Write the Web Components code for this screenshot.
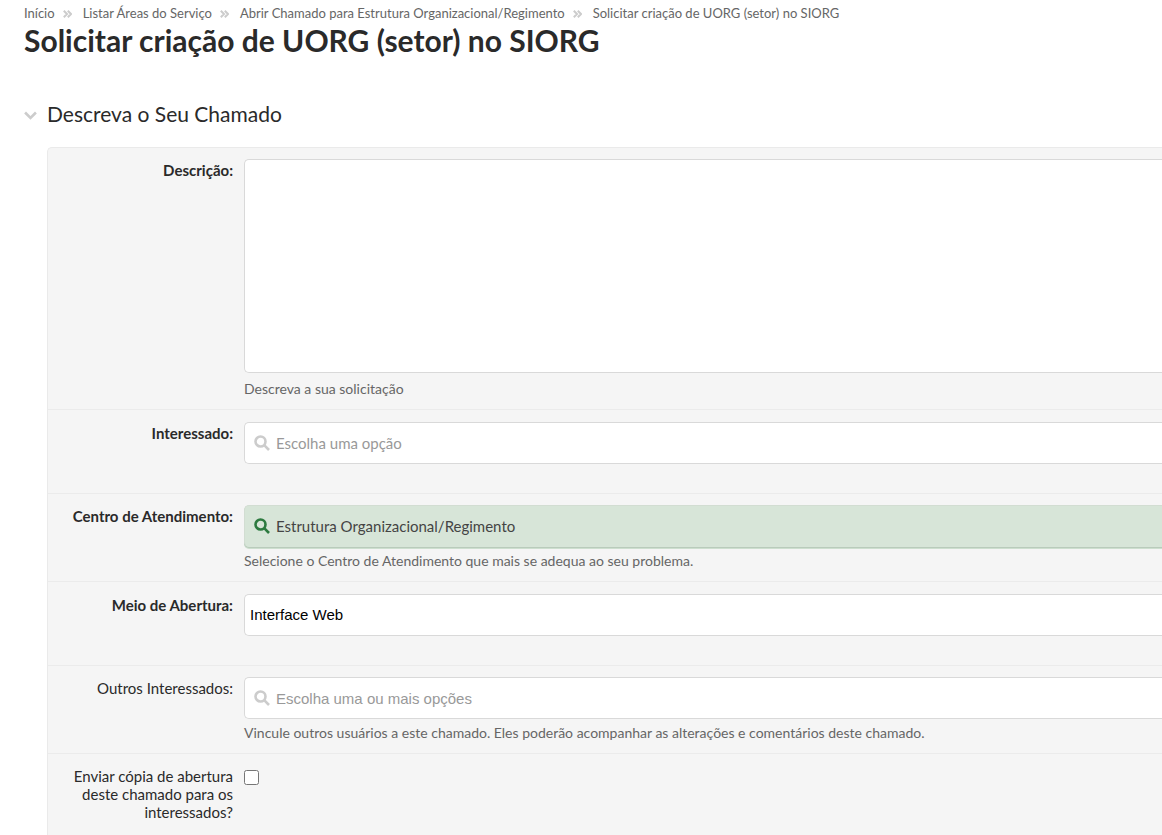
<!DOCTYPE html>
<html lang="pt-BR">
<head>
<meta charset="utf-8">
<meta name="viewport" content="width=device-width, initial-scale=1">
<title>Solicitar criação de UORG (setor) no SIORG</title>
<style>
  html { overflow-x: clip; }
  body { margin: 0; background: #fff; color: #2a2a2a; font: 15px/18px Lato, "Open Sans", sans-serif; }
</style>
</head>
<body>
<request-page heading="Solicitar criação de UORG (setor) no SIORG">
  <bread-crumbs slot="trail">
    <bread-crumb href="#inicio">Início</bread-crumb>
    <bread-crumb href="#areas">Listar Áreas do Serviço</bread-crumb>
    <bread-crumb href="#abrir">Abrir Chamado para Estrutura Organizacional/Regimento</bread-crumb>
    <bread-crumb>Solicitar criação de UORG (setor) no SIORG</bread-crumb>
  </bread-crumbs>
  <form-section heading="Descreva o Seu Chamado">
    <form-field type="textarea" label="Descrição:" required help="Descreva a sua solicitação"></form-field>
    <form-field type="search" label="Interessado:" required placeholder="Escolha uma opção"></form-field>
    <form-field type="search" label="Centro de Atendimento:" required filled value="Estrutura Organizacional/Regimento" help="Selecione o Centro de Atendimento que mais se adequa ao seu problema."></form-field>
    <form-field type="select" label="Meio de Abertura:" required value="Interface Web"></form-field>
    <form-field type="search" label="Outros Interessados:" multiple placeholder="Escolha uma ou mais opções" help="Vincule outros usuários a este chamado. Eles poderão acompanhar as alterações e comentários deste chamado."></form-field>
    <form-field type="checkbox" label="Enviar cópia de abertura deste chamado para os interessados?"></form-field>
  </form-section>
</request-page>
<script>
class RequestPage extends HTMLElement {
  constructor() {
    super();
    this.attachShadow({ mode: 'open' }).innerHTML = `
      <style>
        :host { display: block; padding: 4px 0 0 24px; }
        h1 { margin: 0; font-size: 30px; line-height: 36px; font-weight: 700; }
      </style>
      <slot name="trail"></slot><h1></h1><main><slot></slot></main>`;
    this.shadowRoot.querySelector('h1').textContent = this.getAttribute('heading');
  }
}

class BreadCrumbs extends HTMLElement {
  constructor() {
    super();
    this.attachShadow({ mode: 'open' }).innerHTML = `
      <style>
        :host { display: block; font-size: 13px; line-height: 18px; color: #666; }
        nav { display: flex; flex-wrap: wrap; }
      </style>
      <nav aria-label="Trilha"><slot></slot></nav>`;
  }
}

class BreadCrumb extends HTMLElement {
  constructor() {
    super();
    const href = this.getAttribute('href');
    this.attachShadow({ mode: 'open' }).innerHTML = `
      <style>
        :host { display: flex; align-items: center; }
        a { color: inherit; text-decoration: none; }
        svg { width: 9px; height: 8px; margin: 1px 11px 0 8px; fill: none; stroke: #ccc; stroke-width: 2; }
      </style>` + (href
        ? `<a href="${href}"><slot></slot></a><svg viewBox="0 0 9 8" aria-hidden="true"><path d="M.8 .8 4 4 .8 7.2M4.8 .8 8 4 4.8 7.2"/></svg>`
        : `<span aria-current="page"><slot></slot></span>`);
  }
}

class FormSection extends HTMLElement {
  constructor() {
    super();
    this.attachShadow({ mode: 'open' }).innerHTML = `
      <style>
        :host { display: block; margin-top: 43px; }
        h2 { margin: 0; font-size: 21px; line-height: 26px; font-weight: 400; }
        button { display: flex; align-items: center; gap: 10px; padding: 0; border: 0; background: none; color: inherit; font: inherit; cursor: pointer; }
        svg { width: 13px; height: 9px; margin-top: 3px; fill: none; stroke: #ccc; stroke-width: 2.4; }
        .panel { margin: 20px 0 0 23px; border: 1px solid #eaeaea; border-right: 0; border-radius: 5px 0 0 0; background: #f5f5f5; }
      </style>
      <h2><button type="button" aria-expanded="true"><svg viewBox="0 0 12 8" aria-hidden="true"><path d="M1 1.2 6 6.2 11 1.2"/></svg><span></span></button></h2>
      <div class="panel"><slot></slot></div>`;
    const button = this.shadowRoot.querySelector('button');
    const panel = this.shadowRoot.querySelector('.panel');
    button.querySelector('span').textContent = this.getAttribute('heading');
    button.addEventListener('click', () => {
      panel.hidden = !panel.hidden;
      button.setAttribute('aria-expanded', String(!panel.hidden));
    });
  }
}

const fieldTemplate = document.createElement('template');
fieldTemplate.innerHTML = `
  <style>
    :host { display: grid; grid-template-columns: 185px 1fr; column-gap: 11px; padding: 11px 0; border-bottom: 1px solid #ebebeb; }
    :host(:not([help])) { padding: 12px 0 29px; }
    :host([type=checkbox]) { padding: 11px 0 29px; border-bottom: 0; }
    * { box-sizing: border-box; }
    label { padding: 2px 0 0 24px; text-align: right; }
    :host([required]) label { font-weight: 700; }
    .help { margin: 5px 0 0; font-size: 14px; color: #666; }
    textarea, select, .box { display: block; width: 100%; border: 1px solid #d9d9d9; border-right: 0; border-radius: 5px 0 0 5px; background: #fff; }
    textarea { height: 214px; margin-bottom: 7px; padding: 8px; font: inherit; resize: none; }
    select { height: 42px; padding: 0 5px 2px; appearance: none; color: #000; font: 15px "Liberation Sans", Arial, sans-serif; }
    .box { display: flex; align-items: center; height: 42px; padding-left: 9px; gap: 6px; }
    .box svg { flex: none; width: 16px; height: 16px; fill: none; stroke: #ccc; stroke-width: 2.6; }
    .box input { flex: 1; min-width: 0; height: 40px; padding: 0; border: 0; outline: 0; background: none; color: #444; font: inherit; }
    input::placeholder { color: #999; opacity: 1; }
    :host([multiple]) .box input { font-family: "Liberation Sans", Arial, sans-serif; }
    :host([filled]) .box { background: #d7e5d8; border-color: #d2ddd2; border-bottom-color: #d7e5d8; box-shadow: 0 1px #b9cbbb, 0 2px #cddfcf; }
    :host([filled]) .box svg { stroke: #2c7a3f; }
    input[type=checkbox] { display: block; width: 15px; height: 15px; margin: 5px 0 0; }
  </style>
  <label for="control"></label>
  <div class="field"></div>`;

class FormField extends HTMLElement {
  constructor() {
    super();
    const root = this.attachShadow({ mode: 'open' });
    root.append(fieldTemplate.content.cloneNode(true));
    root.querySelector('label').textContent = this.getAttribute('label');
    const field = root.querySelector('.field');
    const controls = {
      textarea: '<textarea id="control"></textarea>',
      search: '<div class="box"><svg viewBox="0 0 16 16" aria-hidden="true"><circle cx="6.5" cy="6.5" r="5"/><path d="M10.2 10.2 15 15"/></svg><input id="control" type="text"></div>',
      select: '<select id="control"><option></option></select>',
      checkbox: '<input id="control" type="checkbox">'
    };
    field.innerHTML = controls[this.getAttribute('type')];
    const control = root.getElementById('control');
    const value = this.getAttribute('value');
    if (control.localName === 'select') control.options[0].textContent = value;
    else if (value) control.value = value;
    if (this.hasAttribute('placeholder')) control.placeholder = this.getAttribute('placeholder');
    if (this.hasAttribute('required')) control.required = true;
    if (this.hasAttribute('help')) {
      const help = document.createElement('p');
      help.className = 'help';
      help.id = 'help';
      help.textContent = this.getAttribute('help');
      control.setAttribute('aria-describedby', 'help');
      field.append(help);
    }
  }
}

customElements.define('request-page', RequestPage);
customElements.define('bread-crumbs', BreadCrumbs);
customElements.define('bread-crumb', BreadCrumb);
customElements.define('form-section', FormSection);
customElements.define('form-field', FormField);
</script>
</body>
</html>
